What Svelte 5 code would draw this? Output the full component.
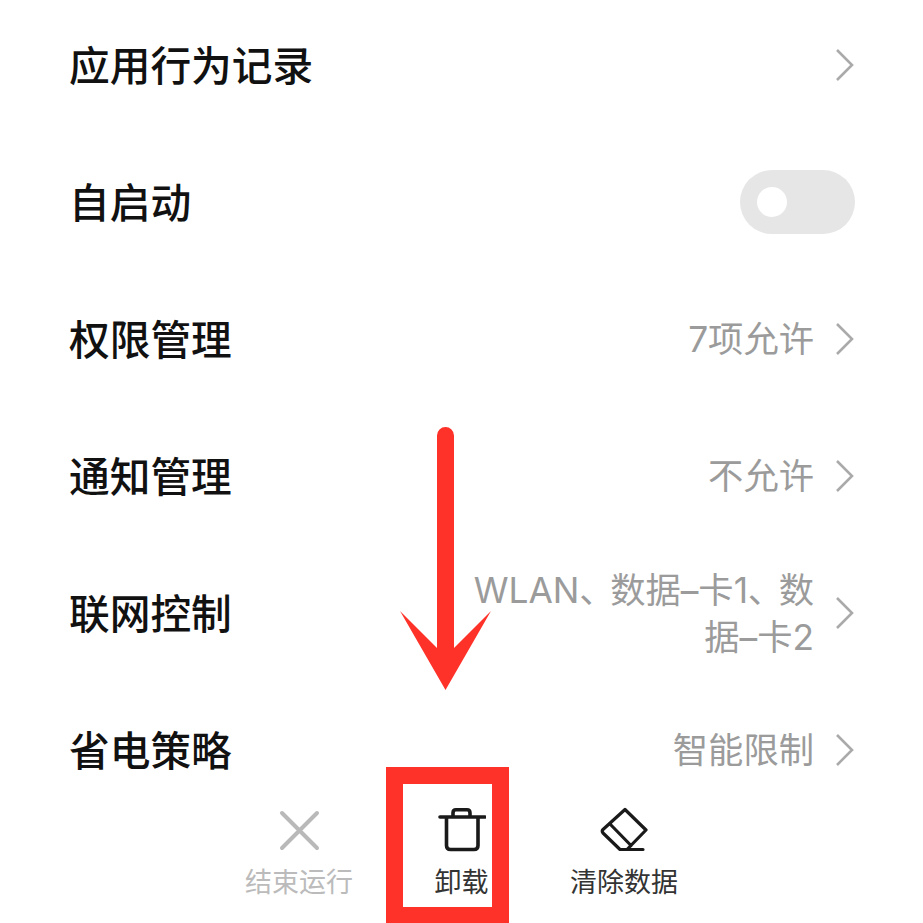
<script>
	const rows = [
		{ title: "应用行为记录" },
		{ title: "自启动", toggle: true },
		{ title: "权限管理", value: ["7项允许"] },
		{ title: "通知管理", value: ["不允许"] },
		{ title: "联网控制", value: ["WLAN、数据–卡1、数", "据–卡2"] },
		{ title: "省电策略", value: ["智能限制"] }
	];
</script>

<div class="screen">
	<div class="list">
		{#each rows as row}
			<div class="row">
				<span class="title">{row.title}</span>
				{#if row.toggle}
					<span class="toggle"><span class="knob"></span></span>
				{:else}
					<div class="right">
						{#if row.value}
							<div class="value">
								{#each row.value as line}
									<div>
										{#each line.split("、") as part, i}{#if i > 0}<span class="sep">、</span>{/if}{part}{/each}
									</div>
								{/each}
							</div>
						{/if}
						<svg class="chevron" viewBox="0 0 20 34" width="20" height="34">
							<path d="M2 2 L17 17 L2 32" fill="none" stroke="#aaa" stroke-width="2.6" />
						</svg>
					</div>
				{/if}
			</div>
		{/each}
	</div>

	<div class="actions">
		<div class="action disabled">
			<svg viewBox="0 0 48 48" width="48" height="48">
				<path d="M7 7 L42 42 M42 7 L7 42" fill="none" stroke="#b9b9b9" stroke-width="4" stroke-linecap="round" />
			</svg>
			<span>结束运行</span>
		</div>
		<div class="action">
			<svg viewBox="0 0 48 48" width="48" height="48">
				<path d="M2 11 H47 M8.500 11 V39.500 Q8.500 43.500 12.500 43.500 H36 Q40 43.500 40 39.500 V11 M15 10 V7 Q15 3.800 18 3.800 H29 Q32 3.800 32 7 V10" fill="none" stroke="#1a1a1a" stroke-width="3.6" stroke-linecap="round" />
			</svg>
			<span>卸载</span>
		</div>
		<div class="action">
			<svg viewBox="0 0 48 48" width="48" height="48">
				<path d="M25 3.500 L46 24 L27 43.500 H20 L3 27 Q1.500 25 3 23.500 Z M9.500 17.500 L31 39.500 M27 43.500 H43" fill="none" stroke="#1a1a1a" stroke-width="3.200" stroke-linecap="round" stroke-linejoin="round" />
			</svg>
			<span>清除数据</span>
		</div>
	</div>

	<div class="highlight"></div>
	<svg class="arrow" viewBox="0 0 91 264" width="91" height="264">
		<path d="M37 8.500 A8.500 8.500 0 0 1 54 8.500 V221 L91 184 L45.500 263 L0 184 L37 221 Z" fill="#ff3229" />
	</svg>
</div>

<style>
	:global(body) {
		margin: 0;
		background: #fff;
	}
	.screen {
		position: relative;
		width: 923px;
		height: 923px;
		overflow: hidden;
		display: flex;
		flex-direction: column;
		font-family: "Noto Sans CJK SC", "Noto Sans", sans-serif;
		background: #fff;
	}
	.list {
		flex: 1;
		min-height: 0;
		overflow: hidden;
		margin-top: -4px;
		padding: 0 68px 0 69px;
	}
	.row {
		height: 137px;
		display: flex;
		align-items: center;
		justify-content: space-between;
	}
	.title {
		font-size: 40.700px;
		font-weight: 500;
		color: #111;
		white-space: nowrap;
		padding-bottom: 2px;
	}
	.right {
		display: flex;
		align-items: center;
		gap: 21px;
		justify-content: flex-end;
	}
	.value {
		text-align: right;
		white-space: nowrap;
		font-family: Inter, "Noto Sans CJK SC", sans-serif;
		font-size: 35.300px;
		line-height: 47px;
		color: #9b9b9b;
		padding-top: 2px;
	}
	.sep {
		font-feature-settings: "palt";
		padding-right: 13px;
	}
	.chevron {
		flex: none;
	}
	.toggle {
		width: 115px;
		height: 64px;
		border-radius: 32px;
		background: #e6e6e6;
		display: flex;
		align-items: center;
		padding-left: 17px;
		box-sizing: border-box;
	}
	.knob {
		width: 30px;
		height: 30px;
		border-radius: 50%;
		background: #fff;
	}
	.actions {
		flex: none;
		height: 120px;
		display: flex;
		justify-content: center;
	}
	.action {
		width: 162.500px;
		display: flex;
		flex-direction: column;
		align-items: center;
		font-size: 27px;
		line-height: 36px;
		color: #333;
	}
	.action svg {
		margin-top: 3px;
		margin-bottom: 9px;
	}
	.disabled {
		color: #bbb;
	}
	.highlight {
		position: absolute;
		left: 386px;
		top: 767px;
		width: 123px;
		height: 156px;
		box-sizing: border-box;
		border: 17px solid #ff3229;
		border-bottom-width: 16px;
	}
	.arrow {
		position: absolute;
		left: 400px;
		top: 427px;
	}
</style>
